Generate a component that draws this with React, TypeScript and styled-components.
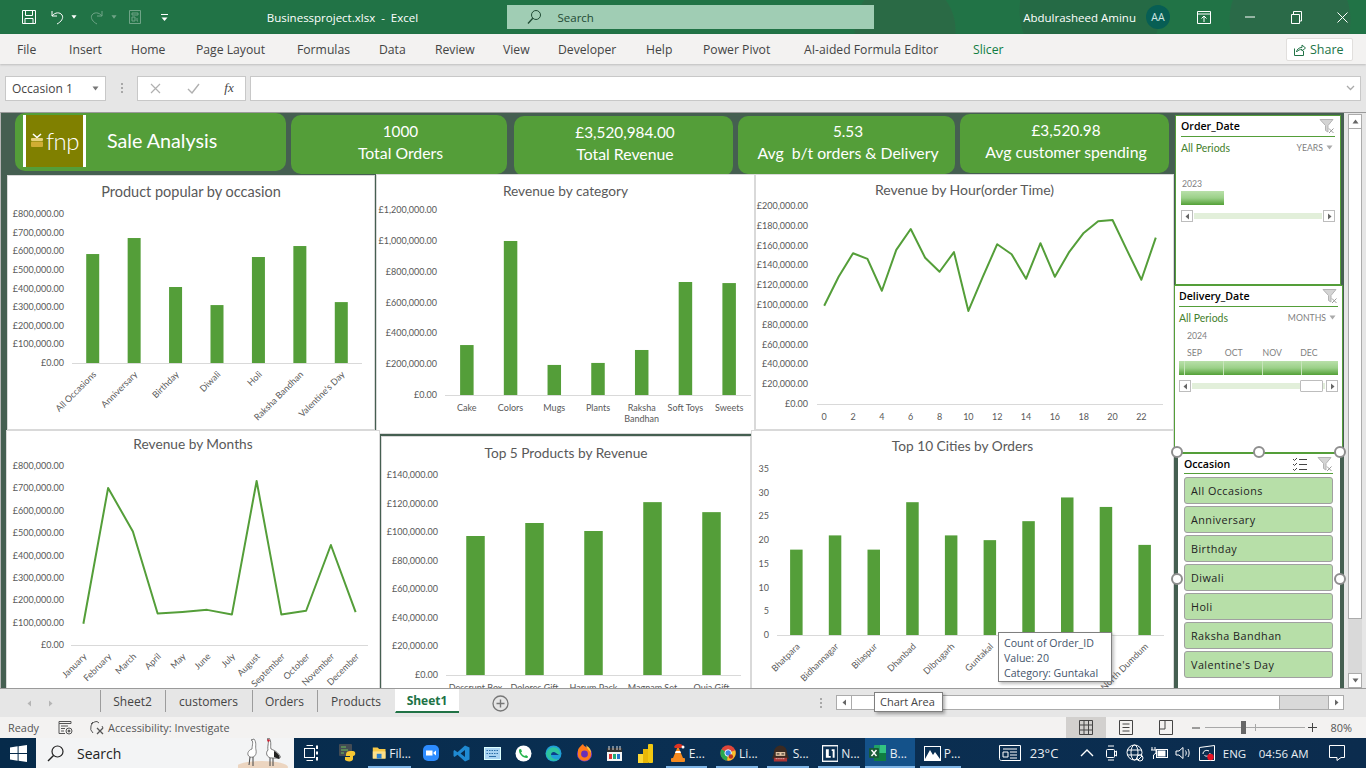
import React from 'react';
import styled, { createGlobalStyle } from 'styled-components';

const GREEN = '#549e39';
const DARK = '#455f51';
const UI_FONT = '"Open Sans", "Noto Sans", sans-serif';
const CHART_FONT = 'Lato, "Open Sans", sans-serif';

const GlobalStyle = createGlobalStyle`
  html, body { margin: 0; padding: 0; background: #e6e6e6; overflow: hidden; }
  * { box-sizing: border-box; }
`;

const Window = styled('div')`
  display: flex;
  flex-direction: column;
  width: 1366px;
  height: 768px;
  overflow: hidden;
  font-family: ${UI_FONT};
`;

/* title bar */
const TitleBar = styled('div')`
  display: flex;
  align-items: center;
  flex: none;
  height: 34px;
  color: #fff;
  background:
    radial-gradient(circle at 905px 30px, #2a6a45 0 50px, transparent 51px),
    radial-gradient(circle at 1090px 10px, #256a45 0 70px, transparent 71px),
    radial-gradient(circle at 1290px 20px, #2a6a48 0 60px, transparent 61px),
    #217346;
`;

const Qat = styled('div')`
  display: flex;
  align-items: center;
  width: 267px;
  padding-left: 20px;
`;

const Slot = styled('div')<{ $w: number; $ml?: number; $faded?: boolean }>`
  display: flex;
  align-items: center;
  justify-content: center;
  flex: none;
  width: ${(p) => p.$w}px;
  margin-left: ${(p) => p.$ml ?? 0}px;
  opacity: ${(p) => (p.$faded ? 0.35 : 1)};
`;

const FileTitle = styled('div')`
  width: 240px;
  font-size: 11.5px;
  white-space: pre;
`;

const SearchBox = styled('div')`
  display: flex;
  align-items: center;
  width: 368px;
  height: 24px;
  padding-left: 19px;
  gap: 16px;
  background: #a0cdb4;
  color: #1f4a33;
  font-size: 11.5px;
`;

const UserName = styled('div')`
  margin-left: 149px;
  width: 115px;
  font-size: 11.5px;
  white-space: nowrap;
`;

const Avatar = styled('div')`
  display: flex;
  align-items: center;
  justify-content: center;
  width: 24px;
  height: 24px;
  margin-left: 8px;
  border-radius: 50%;
  background: #075e54;
  color: #cfe8e4;
  font-size: 10.5px;
`;

const WindowButtons = styled('div')`
  display: flex;
  margin-left: 11px;
`;

/* ribbon tabs */
const RibbonTabs = styled('div')`
  display: flex;
  align-items: center;
  flex: none;
  height: 30px;
  padding-left: 17px;
  background: #f3f2f1;
  box-shadow: 0 1px 2px rgba(0, 0, 0, 0.18);
  position: relative;
  z-index: 1;
`;

const RibbonTab = styled('div')<{ $w: number; $accent?: boolean }>`
  flex: none;
  width: ${(p) => p.$w}px;
  font-size: 12.2px;
  color: ${(p) => (p.$accent ? '#107c41' : '#444')};
  white-space: nowrap;
`;

const ShareButton = styled('div')`
  display: flex;
  align-items: center;
  gap: 4px;
  margin-left: auto;
  margin-right: 13px;
  width: 67px;
  height: 23px;
  padding-left: 6px;
  background: #fff;
  border: 1px solid #e1dfdd;
  border-radius: 2px;
  color: #217346;
  font-size: 12.5px;
`;

/* formula bar */
const FormulaRow = styled('div')`
  display: flex;
  align-items: center;
  flex: none;
  height: 48px;
  padding: 0 5px;
  background: #e6e6e6;
`;

const NameBox = styled('div')`
  display: flex;
  align-items: center;
  justify-content: space-between;
  width: 101px;
  height: 25px;
  padding: 0 6px;
  background: #fff;
  border: 1px solid #c8c8c8;
  font-size: 12px;
  color: #444;
`;

const Grip = styled('div')`
  display: flex;
  flex-direction: column;
  gap: 2px;
  margin: 0 14px 0 15px;
  & > i { display: block; width: 2px; height: 2px; background: #a8a8a8; }
`;

const FxBox = styled('div')`
  display: flex;
  align-items: center;
  width: 109px;
  height: 25px;
  background: #fff;
  border: 1px solid #c8c8c8;
`;

const FxGlyph = styled('span')`
  font-family: "Liberation Serif", serif;
  font-style: italic;
  font-size: 13px;
  color: #444;
`;

const FormulaInput = styled('div')`
  display: flex;
  align-items: center;
  justify-content: flex-end;
  flex: 1;
  height: 25px;
  margin-left: 4px;
  padding-right: 5px;
  background: #fff;
  border: 1px solid #c8c8c8;
`;

/* sheet */
const Sheet = styled('div')`
  display: flex;
  flex: none;
  height: 576px;
  background: ${DARK};
  border-top: 1px solid #9a9a9a;
  border-left: 1px solid #b5b5b5;
  overflow: hidden;
`;

const Dash = styled('div')`
  display: flex;
  flex-direction: column;
  flex: none;
  width: 1173px;
`;

const KpiRow = styled('div')`
  display: flex;
  align-items: flex-start;
  flex: none;
  height: 61px;
  padding-left: 14px;
`;

const Kpi = styled('div')<{ $w: number; $h: number; $top: number; $gap: number }>`
  display: flex;
  flex-direction: column;
  align-items: center;
  justify-content: center;
  flex: none;
  width: ${(p) => p.$w}px;
  height: ${(p) => p.$h}px;
  margin-top: ${(p) => p.$top}px;
  margin-right: ${(p) => p.$gap}px;
  padding: 0 0 6px 3px;
  background: ${GREEN};
  border-radius: 10px;
  color: #fff;
  font-family: ${CHART_FONT};
  font-size: 15.8px;
  line-height: 22px;
  white-space: pre;
`;

const KpiValue = styled('span')`
  font-size: 15.3px;
`;

const BrandCard = styled(Kpi)`
  flex-direction: row;
  justify-content: flex-start;
  padding: 0 0 3px 8px;
`;

const LogoBox = styled('div')`
  display: flex;
  align-items: center;
  justify-content: center;
  gap: 2px;
  width: 63px;
  height: 52px;
  background: #808000;
  border-left: 3px solid #fff;
  border-right: 3px solid #fff;
`;

const LogoText = styled('span')`
  font-family: Lato, sans-serif;
  font-weight: 300;
  font-size: 24px;
  letter-spacing: -0.5px;
  color: #fff;
`;

const BrandTitle = styled('div')`
  margin-left: 21px;
  font-size: 19.7px;
`;

const ChartRow = styled('div')<{ $pad: number }>`
  display: flex;
  align-items: flex-start;
  flex: none;
  padding-left: ${(p) => p.$pad}px;
`;

const ChartCard = styled('div')<{ $w: number; $h: number; $left?: number; $top?: number; $tail?: number }>`
  position: relative;
  flex: none;
  width: ${(p) => p.$w}px;
  height: ${(p) => p.$h}px;
  margin-left: ${(p) => p.$left ?? 0}px;
  margin-top: ${(p) => p.$top ?? 0}px;
  margin-bottom: ${(p) => p.$tail ?? 0}px;
  background: #fff;
  border: 1px solid #d9d9d9;
`;

const ChartTitle = styled('div')<{ $top: number; $size?: number }>`
  padding-top: ${(p) => p.$top}px;
  text-align: center;
  font-family: ${CHART_FONT};
  font-size: ${(p) => p.$size ?? 13.7}px;
  line-height: 18px;
  color: #595959;
`;

const Plot = styled('svg')`
  position: absolute;
  top: 0;
  left: 0;
  display: block;
  font-family: ${CHART_FONT};
  font-size: 9px;
  fill: #595959;
`;

const ValueTip = styled('div')`
  position: absolute;
  left: 246px;
  top: 201px;
  width: 114px;
  height: 50px;
  padding: 3px 0 0 5px;
  background: #fff;
  border: 1px solid #7f7f7f;
  box-shadow: 2px 2px 3px rgba(0, 0, 0, 0.25);
  font-size: 10.6px;
  line-height: 15px;
  color: #44546a;
  white-space: nowrap;
`;

/* slicers */
const SlicerColumn = styled('div')`
  display: flex;
  flex-direction: column;
  flex: none;
  width: 170px;
`;

const DateSlicer = styled('div')<{ $w: number; $h: number; $left: number; $top: number; $pad: number }>`
  flex: none;
  width: ${(p) => p.$w}px;
  height: ${(p) => p.$h}px;
  margin-left: ${(p) => p.$left}px;
  margin-top: ${(p) => p.$top}px;
  padding: 0 ${(p) => p.$pad}px;
  background: #fff;
  border: 1px solid ${GREEN};
`;

const SlicerHead = styled('div')<{ $h: number }>`
  display: flex;
  align-items: center;
  justify-content: space-between;
  height: ${(p) => p.$h}px;
  border-bottom: 1px solid ${GREEN};
  font-family: ${UI_FONT};
  font-size: 10.6px;
  font-weight: 600;
  color: #000;
`;

const PeriodRow = styled('div')`
  display: flex;
  align-items: center;
  justify-content: space-between;
  height: 21px;
  color: #44802c;
  font-family: ${CHART_FONT};
  font-size: 10.5px;
`;

const LevelPick = styled('span')`
  display: flex;
  align-items: center;
  gap: 3px;
  padding-right: 2px;
  font-size: 8.7px;
  color: #7f7f7f;
`;

const YearLabel = styled('div')<{ $top: number; $left: number }>`
  margin-top: ${(p) => p.$top}px;
  padding-left: ${(p) => p.$left}px;
  font-family: ${CHART_FONT};
  font-size: 8.7px;
  line-height: 11px;
  color: #7f7f7f;
`;

const MonthRow = styled('div')`
  display: flex;
  margin-top: 6px;
  padding-left: 8px;
`;

const MonthLabel = styled('div')`
  width: 39px;
  font-family: ${CHART_FONT};
  font-size: 8.7px;
  line-height: 11px;
  color: #7f7f7f;
`;

const PeriodBar = styled('div')<{ $w?: number; $top: number }>`
  display: flex;
  width: ${(p) => (p.$w ? `${p.$w}px` : '100%')};
  height: 14px;
  margin-top: ${(p) => p.$top}px;
  background: linear-gradient(#b9e0aa, #9bd088 50%, #53a037);
`;

const BarCell = styled('div')<{ $w: number }>`
  flex: none;
  width: ${(p) => p.$w}px;
  border-right: 1px solid #c7e5bb;
`;

const TimeScroll = styled('div')<{ $top: number }>`
  display: flex;
  align-items: center;
  height: 12px;
  margin-top: ${(p) => p.$top}px;
`;

const ScrollNub = styled('div')`
  display: flex;
  align-items: center;
  justify-content: center;
  flex: none;
  width: 12px;
  height: 12px;
  background: #fff;
  border: 1px solid #bdbdbd;
`;

const TimeTrack = styled('div')`
  display: flex;
  justify-content: flex-end;
  align-items: center;
  flex: 1;
  height: 6px;
  margin: 0 1px;
  background: #e2efda;
`;

const TimeThumb = styled('div')`
  width: 23px;
  height: 12px;
  margin-right: 2px;
  background: #fff;
  border: 1px solid #bdbdbd;
  border-radius: 1px;
`;

const OccasionSlicer = styled('div')`
  position: relative;
  flex: none;
  width: 168px;
  height: 235px;
  margin-left: 1px;
  padding: 0 7px 0 6px;
  background: #fff;
  border-top: 1px solid ${GREEN};
  border-left: 3px solid ${DARK};
  border-right: 3px solid ${DARK};
`;

const OccasionIcons = styled('div')`
  display: flex;
  align-items: center;
  gap: 10px;
`;

const OccasionList = styled('div')`
  display: flex;
  flex-direction: column;
  gap: 2px;
  margin-top: 3px;
`;

const OccasionItem = styled('div')`
  display: flex;
  align-items: center;
  height: 27px;
  padding-left: 6px;
  background: #b7dfa8;
  border: 1px solid #a0a0a0;
  border-radius: 3px;
  font-size: 10.8px;
  letter-spacing: 0.45px;
  color: #222;
`;

const Handle = styled('div')<{ $x: number; $y: number }>`
  position: absolute;
  left: ${(p) => p.$x}px;
  top: ${(p) => p.$y}px;
  width: 12px;
  height: 12px;
  background: #fff;
  border: 2px solid #8e8e8e;
  border-radius: 50%;
`;

const VScroll = styled('div')`
  display: flex;
  flex-direction: column;
  flex: none;
  width: 22px;
  padding: 1px 4px 0 4px;
  background: #e6e6e6;
`;

const VBtn = styled('div')`
  display: flex;
  align-items: center;
  justify-content: center;
  flex: none;
  height: 15px;
  background: #fff;
  border: 1px solid #ababab;
`;

const VThumb = styled('div')`
  flex: none;
  height: 490px;
  background: #fff;
  border: 1px solid #ababab;
  border-top: none;
`;

const VRest = styled('div')`
  flex: 1;
  background: #d9d9d9;
`;

/* sheet tabs */
const TabRow = styled('div')`
  position: relative;
  display: flex;
  align-items: stretch;
  flex: none;
  height: 29px;
  background: #e6e6e6;
  border-top: 1px solid #9a9a9a;
`;

const TabNav = styled('div')`
  display: flex;
  align-items: center;
  gap: 14px;
  width: 100px;
  padding-left: 26px;
`;

const SheetTab = styled('div')<{ $w: number; $active?: boolean }>`
  display: flex;
  align-items: center;
  justify-content: center;
  flex: none;
  width: ${(p) => p.$w}px;
  height: ${(p) => (p.$active ? '24px' : '22px')};
  margin-top: ${(p) => (p.$active ? '0' : '1px')};
  padding-right: 1px;
  border-left: 1px solid ${(p) => (p.$active ? 'transparent' : '#9c9c9c')};
  background: ${(p) => (p.$active ? '#fff' : 'transparent')};
  border-bottom: ${(p) => (p.$active ? '2px solid #217346' : 'none')};
  color: ${(p) => (p.$active ? '#217346' : '#444')};
  font-weight: ${(p) => (p.$active ? 700 : 400)};
  font-size: 12px;
`;

const TabDots = styled(Grip)`
  margin: 0 0 0 311px;
  align-self: center;
`;

const HScroll = styled('div')`
  display: flex;
  align-items: stretch;
  align-self: flex-start;
  width: 508px;
  height: 15px;
  margin: 6px 0 0 14px;
  background: #d9d9d9;
  border: 1px solid #ababab;
`;

const HBtn = styled('div')`
  display: flex;
  align-items: center;
  justify-content: center;
  flex: none;
  width: 14px;
  background: #fff;
`;

const HThumb = styled('div')`
  flex: none;
  width: 429px;
  background: #fff;
  border-left: 1px solid #ababab;
  border-right: 1px solid #ababab;
`;

const HGap = styled('div')`
  flex: 1;
  border-right: 1px solid #ababab;
`;

const AreaTip = styled('div')`
  position: absolute;
  left: 874px;
  top: 3px;
  width: 69px;
  height: 20px;
  padding-left: 5px;
  background: #fff;
  border: 1px solid #7f7f7f;
  box-shadow: 2px 2px 3px rgba(0, 0, 0, 0.3);
  font-size: 11px;
  line-height: 18px;
  color: #444;
  white-space: nowrap;
`;

/* status bar */
const StatusBar = styled('div')`
  display: flex;
  align-items: center;
  flex: none;
  height: 21px;
  padding: 0 14px 0 8px;
  background: #f3f2f1;
  color: #555;
  font-size: 10.9px;
`;

const StatusText = styled('span')<{ $w?: number; $ml?: number }>`
  flex: none;
  width: ${(p) => (p.$w ? `${p.$w}px` : 'auto')};
  margin-left: ${(p) => p.$ml ?? 0}px;
  white-space: nowrap;
`;

const ViewButton = styled('div')<{ $active?: boolean; $push?: boolean }>`
  display: flex;
  align-items: center;
  justify-content: center;
  flex: none;
  width: 40px;
  height: 21px;
  margin-left: ${(p) => (p.$push ? 'auto' : '0')};
  background: ${(p) => (p.$active ? '#d2d0ce' : 'transparent')};
`;

const ZoomTrack = styled('div')`
  position: relative;
  flex: none;
  width: 100px;
  height: 1px;
  margin: 0 0 0 4px;
  background: #a8a8a8;
`;

const ZoomThumb = styled('div')`
  position: absolute;
  left: 36px;
  top: -6px;
  width: 5px;
  height: 13px;
  background: #666;
`;

const ZoomTick = styled('div')`
  position: absolute;
  left: 50px;
  top: -3px;
  width: 1px;
  height: 7px;
  background: #a8a8a8;
`;

/* task bar */
const TaskBar = styled('div')`
  display: flex;
  align-items: stretch;
  flex: none;
  height: 30px;
  background: linear-gradient(90deg, #062a4a 0, #0a2f52 50%, #0b2c4e 100%);
  color: #e9eef3;
  font-size: 12px;
`;

const WinSearch = styled('div')`
  position: relative;
  display: flex;
  align-items: center;
  flex: none;
  width: 258px;
  padding-left: 11px;
  gap: 13px;
  background: #f3f4f5;
  color: #222;
  font-size: 14px;
  overflow: hidden;
`;

const CraneArt = styled('svg')`
  position: absolute;
  right: 4px;
  top: 0;
`;

const TaskItem = styled('div')<{ $w: number; $ml?: number; $running?: boolean; $active?: boolean }>`
  display: flex;
  align-items: center;
  justify-content: ${(p) => (p.$running ? 'flex-start' : 'center')};
  flex: none;
  gap: 3px;
  width: ${(p) => p.$w}px;
  margin-left: ${(p) => p.$ml ?? 0}px;
  padding-left: ${(p) => (p.$running ? '4px' : '0')};
  background: ${(p) => (p.$active ? '#14528a' : 'transparent')};
  border-bottom: 2px solid ${(p) => (p.$running ? '#7fb5e6' : 'transparent')};
  border-top: 2px solid transparent;
  white-space: nowrap;
`;

const TrayText = styled('div')<{ $w: number; $ml?: number; $size?: number }>`
  display: flex;
  align-items: center;
  flex: none;
  width: ${(p) => p.$w}px;
  margin-left: ${(p) => p.$ml ?? 0}px;
  font-size: ${(p) => p.$size ?? 11.5}px;
  white-space: nowrap;
`;

const IconSvg = styled('svg')`
  display: block;
  flex: none;
`;

/* charts */
interface IPlotArea {
  left: number;
  right: number;
  top: number;
  bottom: number;
}

interface IAxis {
  width: number;
  height: number;
  area: IPlotArea;
  ticks: string[];
  labelRight: number;
  max: number;
}

const GridAxis: React.FC<IAxis & { children?: React.ReactNode }> = ({ width, height, area, ticks, labelRight, children }) => (
  <Plot width={width} height={height}>
    {ticks.map((t, i) => (
      <text key={t} x={labelRight} y={area.top + ((area.bottom - area.top) * i) / (ticks.length - 1) + 3} textAnchor="end">
        {t}
      </text>
    ))}
    <line x1={area.left} x2={area.right} y1={area.bottom + 0.5} y2={area.bottom + 0.5} stroke="#d9d9d9" />
    {children}
  </Plot>
);

interface ISeries extends IAxis {
  values: number[];
  labels: (string | string[])[];
  barWidth?: number;
  rotate?: boolean;
  labelEvery?: number;
}

const XLabels: React.FC<{ area: IPlotArea; labels: (string | string[])[]; rotate?: boolean; every?: number; count: number }> = ({
  area,
  labels,
  rotate,
  every = 1,
  count,
}) => {
  const band = (area.right - area.left) / count;
  return (
    <>
      {labels.map((label, i) => {
        if (!label) return null;
        const cx = area.left + band * (i * every + 0.5);
        if (rotate) {
          return (
            <text key={i} transform={`translate(${cx + 4} ${area.bottom + 12}) rotate(-45)`} textAnchor="end">
              {label}
            </text>
          );
        }
        const lines = Array.isArray(label) ? label : [label];
        return lines.map((line, j) => (
          <text key={`${i}-${j}`} x={cx} y={area.bottom + 16 + j * 11} textAnchor="middle">
            {line}
          </text>
        ));
      })}
    </>
  );
};

const BarChart: React.FC<ISeries> = ({ values, labels, barWidth = 13, rotate, ...axis }) => {
  const { area, max } = axis;
  const band = (area.right - area.left) / values.length;
  const scale = (area.bottom - area.top) / max;
  return (
    <GridAxis {...axis}>
      {values.map((v, i) => (
        <rect key={i} x={area.left + band * (i + 0.5) - barWidth / 2} y={area.bottom - v * scale} width={barWidth} height={v * scale} fill={GREEN} />
      ))}
      <XLabels area={area} labels={labels} rotate={rotate} count={values.length} />
    </GridAxis>
  );
};

const LineChart: React.FC<ISeries> = ({ values, labels, rotate, labelEvery, ...axis }) => {
  const { area, max } = axis;
  const band = (area.right - area.left) / values.length;
  const scale = (area.bottom - area.top) / max;
  const points = values.map((v, i) => `${area.left + band * (i + 0.5)},${area.bottom - v * scale}`).join(' ');
  return (
    <GridAxis {...axis}>
      <polyline points={points} fill="none" stroke={GREEN} strokeWidth={2} strokeLinejoin="round" />
      <XLabels area={area} labels={labels} rotate={rotate} every={labelEvery} count={values.length} />
    </GridAxis>
  );
};

const descending = (top: number, step: number) => {
  const out: string[] = [];
  for (let v = top; v >= 0; v -= step) out.push(`£${v.toLocaleString('en-GB')}.00`);
  return out;
};

/* icons */
const Svg: React.FC<{ w?: number; h?: number; color?: string; children: React.ReactNode }> = ({ w = 16, h = 16, color = 'currentColor', children }) => (
  <IconSvg width={w} height={h} viewBox={`0 0 ${w} ${h}`} fill="none" stroke={color} strokeWidth={1}>
    {children}
  </IconSvg>
);

const Caret: React.FC<{ color?: string; dir?: 'up' | 'down' | 'left' | 'right'; size?: number }> = ({ color = '#666', dir = 'down', size = 7 }) => {
  const d = { up: 'M0.5 5.5 L3.5 1.5 L6.5 5.5Z', down: 'M0.5 1.5 L6.5 1.5 L3.5 5.5Z', left: 'M5 0.5 L5 6.5 L1.5 3.5Z', right: 'M2 0.5 L2 6.5 L5.5 3.5Z' }[dir];
  return (
    <IconSvg width={size} height={size} viewBox="0 0 7 7">
      <path d={d} fill={color} />
    </IconSvg>
  );
};

const FunnelClear: React.FC = () => (
  <Svg w={16} h={16} color="#b4b4b4">
    <path d="M1 1.5H14L9 7.5V14L6.5 12.5V7.5Z" fill="#d4d4d4" />
    <path d="M10 10.5L14.5 15M14.5 10.5L10 15" stroke="#9a9a9a" />
  </Svg>
);

const FnpGift = () => (
  <IconSvg width={14} height={15} viewBox="0 0 14 15">
    <path d="M3 1L7 4.5L11 1" stroke="#fff" strokeWidth={1.6} fill="none" />
    <rect x={1} y={5} width={12} height={3} rx={1} fill="#e6d27a" />
    <rect x={1} y={8.5} width={12} height={5.5} rx={1} fill="#d0ad33" />
  </IconSvg>
);

const WinLogo = () => (
  <IconSvg width={17} height={17} viewBox="0 0 17 17">
    <path d="M0 2.4L7.6 1.3V8H0ZM8.6 1.2L17 0V8H8.6ZM0 9H7.6V15.7L0 14.6ZM8.6 9H17V17L8.6 15.8Z" fill="#fff" />
  </IconSvg>
);

const Cranes = () => (
  <CraneArt width={52} height={30} viewBox="0 0 52 30">
    <ellipse cx={24} cy={29} rx={26} ry={6} fill="#ecd5c0" />
    <path d="M13 2C16 2 14 8 14 11C10 12 8 17 12 19C16 20 19 17 18 12C17 8 19 5 16 1Z" fill="#fff" stroke="#555" strokeWidth={0.7} />
    <path d="M15 19V28M12 19L11 27" stroke="#444" />
    <path d="M29 1C32 2 29 8 30 12C27 15 29 20 34 20C39 20 44 21 42 18C39 13 35 12 33 11C32 8 34 4 31 0Z" fill="#fff" stroke="#444" strokeWidth={0.7} />
    <path d="M36 13C40 15 43 19 41 21L36 19Z" fill="#222" />
    <path d="M30 1L32 2L31 4L29 3Z" fill="#c23" />
    <path d="M32 20V28M35 20V28" stroke="#444" />
  </CraneArt>
);

const AppIcon: React.FC<{ kind: string }> = ({ kind }) => {
  switch (kind) {
    case 'taskview':
      return (
        <Svg w={18} h={18} color="#fff">
          <path d="M3.5 1.5H10M3.5 16.5H10" />
          <rect x={1.5} y={4.5} width={10} height={9} />
          <path d="M14 1.5V5M14 7.5V10.5M14 13V16.5" strokeWidth={2} />
        </Svg>
      );
    case 'python':
      return (
        <svg width={18} height={18} viewBox="0 0 18 18">
          <rect x={0} y={0} width={13} height={12} rx={1} fill="#444c54" />
          <path d="M2 3H7M2 6H9M2 9H5" stroke="#6fbf5a" />
          <path d="M11 7C7 7 7 10 7 12H11V13H6V16C8 18 14 18 14 15V12C17 12 17 7 14 7Z" fill="#f5c733" />
        </svg>
      );
    case 'files':
      return (
        <svg width={18} height={16} viewBox="0 0 18 16">
          <path d="M1 1H7L9 3H17V15H1Z" fill="#f7c948" />
          <rect x={1} y={6} width={16} height={9} fill="#fce08a" />
          <rect x={6} y={9} width={6} height={6} fill="#2a7fcf" />
        </svg>
      );
    case 'zoom':
      return (
        <svg width={16} height={16} viewBox="0 0 16 16">
          <rect width={16} height={16} rx={5} fill="#2d8cff" />
          <path d="M3 5.5H9.5V10.5H3Z M10.5 7.5L13 5.5V10.5L10.5 8.5Z" fill="#fff" />
        </svg>
      );
    case 'vscode':
      return (
        <svg width={17} height={17} viewBox="0 0 17 17">
          <path d="M12 0.5L16.5 2.5V14.5L12 16.5L4.5 9.8L1.5 12L0.5 11V6L1.5 5L4.5 7.2ZM12 5L7.5 8.5L12 12Z" fill="#1f8ad2" />
        </svg>
      );
    case 'keyboard':
      return (
        <svg width={17} height={13} viewBox="0 0 17 13">
          <rect x={0.5} y={0.5} width={16} height={12} fill="#a8d3f2" stroke="#dff" />
          <path d="M2.5 3.5H14.5M2.5 6.5H14.5" stroke="#2a6fa8" strokeDasharray="1.5 1" />
          <path d="M5 9.5H12" stroke="#2a6fa8" />
        </svg>
      );
    case 'whatsapp':
      return (
        <svg width={17} height={17} viewBox="0 0 17 17">
          <circle cx={8.5} cy={8.5} r={8} fill="#fff" />
          <path d="M4 4.5L6 4L7 6.5L6 7.5C7 9.5 8 10.5 10 11L11 10L13 11.5L12.5 13C8 13.5 3.5 9 4 4.5Z" fill="#25b54c" />
        </svg>
      );
    case 'edge':
      return (
        <svg width={17} height={17} viewBox="0 0 17 17">
          <circle cx={8.5} cy={8.5} r={8} fill="#1f9fd8" />
          <path d="M1 9C2 3 8 1 12 3C15 5 16 9 14 10H6C6 13 10 15 14 14C11 17 3 17 1 9Z" fill="#2ec4a0" />
          <path d="M6 10C6 7 9 6 11 8L14 10Z" fill="#0d3f8a" />
        </svg>
      );
    case 'firefox':
      return (
        <svg width={17} height={18} viewBox="0 0 17 18">
          <circle cx={8.5} cy={10} r={7.5} fill="#7b3fc4" />
          <path d="M2 6C3 3 5 2 7 0C8 3 11 3 13 5C16 8 16 13 12 16C8 18 3 16 2 12Z" fill="#ff7a1a" />
          <circle cx={8.5} cy={10} r={3.4} fill="#6a2fb8" />
          <path d="M10 1C12 3 15 4 15 9C13 6 11 5 10 1Z" fill="#ffc93a" />
        </svg>
      );
    case 'calendar':
      return (
        <svg width={17} height={17} viewBox="0 0 17 17">
          <rect x={1} y={3} width={15} height={13} fill="#f5f5f5" />
          <rect x={1} y={3} width={15} height={4} fill="#333" />
          <path d="M3 1V5M7 1V5M11 1V5M14 1V5" stroke="#ddd" />
          <rect x={3} y={9} width={3} height={5} fill="#d33" />
          <rect x={7} y={9} width={3} height={5} fill="#2a7" />
          <rect x={11} y={9} width={3} height={5} fill="#27c" />
        </svg>
      );
    case 'powerbi':
      return (
        <svg width={15} height={19} viewBox="0 0 15 19">
          <rect x={10} y={0} width={5} height={19} rx={1} fill="#f2c811" />
          <rect x={5} y={5} width={5} height={14} fill="#e8b708" />
          <rect x={0} y={10} width={5} height={9} fill="#fdd835" />
        </svg>
      );
    case 'vlc':
      return (
        <svg width={16} height={20} viewBox="0 0 16 20">
          <path d="M8 3L13 15H3Z" fill="#f58a1f" />
          <path d="M5.8 8H10.2L11 10H5Z" fill="#fff" />
          <rect x={1} y={15} width={14} height={4} rx={1} fill="#f58a1f" />
          <path d="M4 4C6 0 11 0 13 3L11 5H5Z" fill="#d32" />
          <circle cx={13} cy={4} r={1.5} fill="#fff" />
        </svg>
      );
    case 'chrome':
      return (
        <svg width={18} height={18} viewBox="0 0 18 18">
          <circle cx={9} cy={9} r={8.5} fill="#e0463a" />
          <path d="M9 9L1.6 4.8C0 7 0 12 2.5 14.5C4 16.5 6 17.3 8 17.4Z" fill="#2aa84f" />
          <path d="M9 9L16.8 6C18 9 17.5 14 12 17C10.5 17.5 9 17.5 8 17.4Z" fill="#f8c22c" />
          <circle cx={9} cy={9} r={3.6} fill="#3d84e6" stroke="#fff" />
          <circle cx={12} cy={13} r={2.5} fill="#b32" />
        </svg>
      );
    case 'game':
      return (
        <svg width={20} height={18} viewBox="0 0 20 18">
          <path d="M3 9C3 3 7 1 10 1C14 1 17 4 17 9L19 15H1Z" fill="#3a2a22" />
          <rect x={5} y={8} width={10} height={4} fill="#e8c9a8" />
          <path d="M6 10H9M11 10H14" stroke="#111" />
          <path d="M3 14H17V18H3Z" fill="#a33" />
          <path d="M5 15H15" stroke="#eee" strokeDasharray="1 1" />
        </svg>
      );
    case 'notion':
      return (
        <svg width={17} height={17} viewBox="0 0 17 17">
          <rect x={0.5} y={0.5} width={16} height={16} fill="#0a2f52" stroke="#fff" strokeWidth={1.4} />
          <path d="M4 4H7V11H9V13H4ZM10 4H13V13H11V6H10Z" fill="#fff" />
        </svg>
      );
    case 'excel':
      return (
        <svg width={18} height={18} viewBox="0 0 18 18">
          <rect x={5} y={1} width={12} height={16} rx={1} fill="#21a366" />
          <rect x={11} y={1} width={6} height={8} fill="#33c481" />
          <rect x={5} y={9} width={12} height={8} fill="#107c41" />
          <rect x={0} y={4} width={10} height={10} rx={1} fill="#185c37" />
          <path d="M2.5 6L7.5 12M7.5 6L2.5 12" stroke="#fff" strokeWidth={1.4} />
        </svg>
      );
    case 'photos':
      return (
        <svg width={17} height={15} viewBox="0 0 17 15">
          <rect x={0.5} y={0.5} width={16} height={14} fill="#0a2f52" stroke="#fff" />
          <path d="M1 13L6 4L9 9L11 6L16 13V14H1Z" fill="#fff" />
        </svg>
      );
    default:
      return null;
  }
};

const ribbonTabs: [string, number][] = [
  ['File', 52], ['Insert', 62], ['Home', 65], ['Page Layout', 101], ['Formulas', 82], ['Data', 56], ['Review', 68], ['View', 55],
  ['Developer', 88], ['Help', 57], ['Power Pivot', 101], ['AI-aided Formula Editor', 169],
];

const occasions = ['All Occasions', 'Anniversary', 'Birthday', 'Diwali', 'Holi', 'Raksha Bandhan', "Valentine's Day"];
const occasionValues = [585, 671, 408, 311, 569, 628, 327];
const categoryLabels = ['Cake', 'Colors', 'Mugs', 'Plants', ['Raksha', 'Bandhan'], 'Soft Toys', 'Sweets'];
const categoryValues = [324, 999, 195, 208, 292, 733, 726];
const hourValues = [99.3, 128.5, 152.3, 146.6, 114.4, 155.7, 176.8, 147.7, 133.6, 153.4, 94, 128.5, 161.4, 151.3, 126.5, 162.4, 128.5, 153.7, 172.8, 184.6, 185.9, 155.4, 125.5, 168.1];
const hourLabels = Array.from({ length: 12 }, (_, i) => String(i * 2));
const months = ['January', 'February', 'March', 'April', 'May', 'June', 'July', 'August', 'September', 'October', 'November', 'December'];
const monthValues = [95, 702, 507, 141, 148, 157, 136, 733, 136, 153, 447, 147];
const productLabels = ['Descrupt Box', 'Dolores Gift', 'Harum Pack', 'Magnam Set', 'Quia Gift'];
const productValues = [97.3, 106.4, 100.8, 121, 114];
const cityValues = [18, 21, 18, 28, 21, 20, 24, 29, 27, 19];
const cityLabels = ['Bhatpara', 'Bidhannagar', 'Bilaspur', 'Dhanbad', 'Dibrugarh', 'Guntakal', '', '', '', 'North Dumdum'];

const App: React.FC = () => (
  <Window>
    <GlobalStyle />
    <TitleBar>
      <Qat>
        <Slot $w={18}>
          <Svg color="#fff">
            <path d="M1.5 1.5H14.5V14.5H1.5Z M4.5 1.5V6.5H11.5V1.5 M4 14.5V9.5H12V14.5" />
          </Svg>
        </Slot>
        <Slot $w={26} $ml={6}>
          <Svg color="#fff">
            <path d="M3 2V7H8 M3 7C6 3 11 3 13 6C15 9 12 13 8 15" />
          </Svg>
        </Slot>
        <Slot $w={8}><Caret color="#fff" size={6} /></Slot>
        <Slot $w={26} $ml={6} $faded>
          <Svg color="#fff">
            <path d="M13 2V7H8 M13 7C10 3 5 3 3 6C1 9 4 13 8 15" />
          </Svg>
        </Slot>
        <Slot $w={8} $faded><Caret color="#fff" size={6} /></Slot>
        <Slot $w={18} $ml={8} $faded>
          <Svg color="#fff">
            <path d="M2.5 1.5H13.5V14.5H2.5Z M5 4H11V6H5Z M5 8H8V12H5Z M10 9V12H11" />
          </Svg>
        </Slot>
        <Slot $w={16} $ml={12}>
          <Svg w={9} h={9} color="#fff">
            <path d="M1 1.5H8" />
            <path d="M1.5 4.5H7.5L4.5 8Z" fill="#fff" stroke="none" />
          </Svg>
        </Slot>
      </Qat>
      <FileTitle>Businessproject.xlsx  -  Excel</FileTitle>
      <SearchBox>
        <Svg w={16} h={16} color="#1f4a33">
          <circle cx={10} cy={6} r={4.5} />
          <path d="M6.8 9.2L2 14.5" strokeWidth={1.3} />
        </Svg>
        Search
      </SearchBox>
      <UserName>Abdulrasheed Aminu</UserName>
      <Avatar>AA</Avatar>
      <WindowButtons>
        <Slot $w={47}>
          <Svg w={14} h={13} color="#fff">
            <path d="M0.5 0.5H13.5V12.5H0.5Z M0.5 3H13.5 M7 11V5.5 M4.5 7.5L7 5L9.5 7.5" />
          </Svg>
        </Slot>
        <Slot $w={45}>
          <Svg w={10} h={2} color="#fff"><path d="M0 1H10" /></Svg>
        </Slot>
        <Slot $w={47}>
          <Svg w={11} h={13} color="#fff">
            <path d="M0.5 3.5H8.5V12.5H0.5Z M2.5 3.5V0.5H10.5V10H8.5" />
          </Svg>
        </Slot>
        <Slot $w={46}>
          <Svg w={11} h={11} color="#fff"><path d="M0.5 0.5L10.5 10.5M10.5 0.5L0.5 10.5" /></Svg>
        </Slot>
      </WindowButtons>
    </TitleBar>

    <RibbonTabs>
      {ribbonTabs.map(([label, w]) => (
        <RibbonTab key={label} $w={w}>{label}</RibbonTab>
      ))}
      <RibbonTab $w={40} $accent>Slicer</RibbonTab>
      <ShareButton>
        <Svg w={13} h={13} color="#217346">
          <path d="M1.5 5.5V12.5H10.5V8 M3.5 9C4 6 6 4.5 9 4.5V2L12.5 5L9 8V6.5C7 6.5 5 7 3.5 9Z" />
        </Svg>
        Share
      </ShareButton>
    </RibbonTabs>

    <FormulaRow>
      <NameBox>
        Occasion 1
        <Caret color="#777" />
      </NameBox>
      <Grip><i /><i /><i /></Grip>
      <FxBox>
        <Slot $w={34}>
          <Svg w={11} h={11} color="#b0b0b0"><path d="M1 1L10 10M10 1L1 10" strokeWidth={1.2} /></Svg>
        </Slot>
        <Slot $w={42}>
          <Svg w={13} h={11} color="#b0b0b0"><path d="M1 6L5 10L12 1" strokeWidth={1.4} /></Svg>
        </Slot>
        <Slot $w={30}><FxGlyph>fx</FxGlyph></Slot>
      </FxBox>
      <FormulaInput>
        <Svg w={9} h={6} color="#aaa"><path d="M1 1L4.5 4.5L8 1" strokeWidth={1.3} /></Svg>
      </FormulaInput>
    </FormulaRow>

    <Sheet>
      <Dash>
        <KpiRow>
          <BrandCard $w={271} $h={58} $top={0} $gap={5}>
            <LogoBox>
              <FnpGift />
              <LogoText>fnp</LogoText>
            </LogoBox>
            <BrandTitle>Sale Analysis</BrandTitle>
          </BrandCard>
          <Kpi $w={216} $h={59} $top={2} $gap={7}><KpiValue>1000</KpiValue><span>Total Orders</span></Kpi>
          <Kpi $w={219} $h={60} $top={3} $gap={5}><KpiValue>£3,520,984.00</KpiValue><span>Total Revenue</span></Kpi>
          <Kpi $w={217} $h={58} $top={3} $gap={5}><KpiValue>5.53</KpiValue><span>Avg  b/t orders &amp; Delivery</span></Kpi>
          <Kpi $w={209} $h={59} $top={1} $gap={0}><KpiValue>£3,520.98</KpiValue><span>Avg customer spending</span></Kpi>
        </KpiRow>
        <ChartRow $pad={6}>
          <ChartCard $w={368} $h={255} $top={1}>
            <ChartTitle $top={7} $size={14.5}>Product popular by occasion</ChartTitle>
            <BarChart
              width={368}
              height={255}
              area={{ left: 64, right: 354, top: 38, bottom: 187 }}
              ticks={descending(800000, 100000)}
              labelRight={56}
              max={800}
              values={occasionValues}
              labels={occasions}
              rotate
            />
          </ChartCard>
          <ChartCard $w={379} $h={260} $left={1} $tail={-4}>
            <ChartTitle $top={7}>Revenue by category</ChartTitle>
            <BarChart
              width={379}
              height={260}
              area={{ left: 68, right: 374, top: 35, bottom: 220 }}
              ticks={descending(1200000, 200000)}
              labelRight={60}
              max={1200}
              values={categoryValues}
              labels={categoryLabels}
              barWidth={13.5}
            />
          </ChartCard>
          <ChartCard $w={419} $h={256}>
            <ChartTitle $top={6} $size={14}>Revenue by Hour(order Time)</ChartTitle>
            <LineChart
              width={419}
              height={256}
              area={{ left: 61, right: 407, top: 31, bottom: 229 }}
              ticks={descending(200000, 20000)}
              labelRight={52}
              max={200}
              values={hourValues}
              labels={hourLabels}
              labelEvery={2}
            />
          </ChartCard>
        </ChartRow>
        <ChartRow $pad={5}>
          <ChartCard $w={374} $h={260}>
            <ChartTitle $top={4}>Revenue by Months</ChartTitle>
            <LineChart
              width={374}
              height={260}
              area={{ left: 64, right: 361, top: 35, bottom: 214 }}
              ticks={descending(800000, 100000)}
              labelRight={57}
              max={800}
              values={monthValues}
              labels={months}
              rotate
            />
          </ChartCard>
          <ChartCard $w={370} $h={254} $left={1} $top={6}>
            <ChartTitle $top={7}>Top 5 Products by Revenue</ChartTitle>
            <BarChart
              width={370}
              height={254}
              area={{ left: 64, right: 359, top: 38, bottom: 238 }}
              ticks={descending(140000, 20000)}
              labelRight={56}
              max={140}
              values={productValues}
              labels={productLabels}
              barWidth={18.5}
            />
          </ChartCard>
          <ChartCard $w={423} $h={260}>
            <ChartTitle $top={6}>Top 10 Cities by Orders</ChartTitle>
            <BarChart
              width={423}
              height={260}
              area={{ left: 25, right: 412, top: 38, bottom: 204 }}
              ticks={['35', '30', '25', '20', '15', '10', '5', '0']}
              labelRight={17}
              max={35}
              values={cityValues}
              labels={cityLabels}
              barWidth={12.5}
              rotate
            />
            <ValueTip>
              Count of Order_ID
              <br />
              Value: 20
              <br />
              Category: Guntakal
            </ValueTip>
          </ChartCard>
        </ChartRow>
      </Dash>

      <SlicerColumn>
        <DateSlicer $w={166} $h={170} $left={1} $top={2} $pad={5}>
          <SlicerHead $h={21}>
            Order_Date
            <FunnelClear />
          </SlicerHead>
          <PeriodRow>
            All Periods
            <LevelPick>YEARS <Caret color="#aaa" /></LevelPick>
          </PeriodRow>
          <YearLabel $top={20} $left={1}>2023</YearLabel>
          <PeriodBar $w={43} $top={2} />
          <TimeScroll $top={5}>
            <ScrollNub><Caret dir="left" /></ScrollNub>
            <TimeTrack />
            <ScrollNub><Caret dir="right" /></ScrollNub>
          </TimeScroll>
        </DateSlicer>
        <DateSlicer $w={169} $h={168} $left={0} $top={0} $pad={4}>
          <SlicerHead $h={21}>
            Delivery_Date
            <FunnelClear />
          </SlicerHead>
          <PeriodRow>
            All Periods
            <LevelPick>MONTHS <Caret color="#aaa" /></LevelPick>
          </PeriodRow>
          <YearLabel $top={2} $left={8}>2024</YearLabel>
          <MonthRow>
            <MonthLabel>SEP</MonthLabel>
            <MonthLabel>OCT</MonthLabel>
            <MonthLabel>NOV</MonthLabel>
            <MonthLabel>DEC</MonthLabel>
          </MonthRow>
          <PeriodBar $top={3}>
            <BarCell $w={6} />
            <BarCell $w={39} />
            <BarCell $w={39} />
            <BarCell $w={39} />
          </PeriodBar>
          <TimeScroll $top={5}>
            <ScrollNub><Caret dir="left" /></ScrollNub>
            <TimeTrack><TimeThumb /></TimeTrack>
            <ScrollNub><Caret dir="right" /></ScrollNub>
          </TimeScroll>
        </DateSlicer>
        <OccasionSlicer>
          <SlicerHead $h={20}>
            Occasion
            <OccasionIcons>
              <Svg w={15} h={14} color="#444">
                <path d="M1 2L2.5 3.5L5 1M1 7L2.5 8.5L5 6M1 12L2.5 13.5L5 11M7 2.5H15M7 7.5H15M7 12.5H15" />
              </Svg>
              <FunnelClear />
            </OccasionIcons>
          </SlicerHead>
          <OccasionList>
            {occasions.map((o) => (
              <OccasionItem key={o}>{o}</OccasionItem>
            ))}
          </OccasionList>
          <Handle $x={-7} $y={-8} />
          <Handle $x={75} $y={-8} />
          <Handle $x={156} $y={-8} />
          <Handle $x={-7} $y={119} />
          <Handle $x={156} $y={119} />
        </OccasionSlicer>
      </SlicerColumn>

      <VScroll>
        <VBtn><Caret dir="up" /></VBtn>
        <VThumb />
        <VRest />
        <VBtn><Caret /></VBtn>
      </VScroll>
    </Sheet>

    <TabRow>
      <TabNav>
        <Caret dir="left" color="#b5b5b5" />
        <Caret dir="right" color="#b5b5b5" />
      </TabNav>
      <SheetTab $w={65}>Sheet2</SheetTab>
      <SheetTab $w={87}>customers</SheetTab>
      <SheetTab $w={65}>Orders</SheetTab>
      <SheetTab $w={78}>Products</SheetTab>
      <SheetTab $w={64} $active>Sheet1</SheetTab>
      <Slot $w={17} $ml={33}>
        <Svg w={17} h={17} color="#777">
          <circle cx={8.5} cy={8.5} r={7.5} strokeWidth={1.3} />
          <path d="M8.5 4.5V12.5M4.5 8.5H12.5" strokeWidth={1.4} />
        </Svg>
      </Slot>
      <TabDots><i /><i /><i /></TabDots>
      <HScroll>
        <HBtn><Caret dir="left" /></HBtn>
        <HThumb />
        <HGap />
        <HBtn><Caret dir="right" /></HBtn>
      </HScroll>
      <AreaTip>Chart Area</AreaTip>
    </TabRow>

    <StatusBar>
      <StatusText $w={50}>Ready</StatusText>
      <Svg w={15} h={15} color="#555">
        <path d="M1 1.5H13V3.5H1Z M1 3.5V13.5H7 M3 6H10M3 8.5H7M3 11H6" />
        <circle cx={11} cy={11} r={3} />
        <circle cx={11} cy={11} r={1} fill="#555" />
      </Svg>
      <Slot $w={18} $ml={15}>
        <Svg w={16} h={16} color="#555">
          <path d="M8 1.5A6.5 6.5 0 0 0 4 13 M2 4L4 2 M8 1.5L10 3 M13 6L14 8" />
          <path d="M8 8L14 14M14 8L8 14" strokeWidth={1.3} />
        </Svg>
      </Slot>
      <StatusText $ml={2}>Accessibility: Investigate</StatusText>
      <ViewButton $active $push>
        <Svg w={14} h={15} color="#444"><path d="M0.5 0.5H13.5V14.5H0.5Z M0.5 5H13.5M0.5 10H13.5M5 0.5V14.5M9.5 0.5V14.5" /></Svg>
      </ViewButton>
      <ViewButton>
        <Svg w={14} h={15} color="#444"><path d="M0.5 0.5H13.5V14.5H0.5Z M3.5 4H10.5M3.5 7.5H10.5M3.5 11H10.5" /></Svg>
      </ViewButton>
      <ViewButton>
        <Svg w={14} h={15} color="#444"><path d="M0.5 0.5H13.5V14.5H0.5Z M0.5 9H6V0.5" /></Svg>
      </ViewButton>
      <Slot $w={10} $ml={5}>
        <Svg w={8} h={2} color="#444"><path d="M0 1H8" /></Svg>
      </Slot>
      <ZoomTrack><ZoomTick /><ZoomThumb /></ZoomTrack>
      <Slot $w={10} $ml={3}>
        <Svg w={9} h={9} color="#444"><path d="M0 4.5H9M4.5 0V9" /></Svg>
      </Slot>
      <StatusText $ml={13}>80%</StatusText>
    </StatusBar>

    <TaskBar>
      <Slot $w={36}><WinLogo /></Slot>
      <WinSearch>
        <Svg w={17} h={17} color="#222">
          <circle cx={10.5} cy={6.5} r={5.5} strokeWidth={1.2} />
          <path d="M6.5 10.5L1 16" strokeWidth={1.4} />
        </Svg>
        Search
        <Cranes />
      </WinSearch>
      <TaskItem $w={36}><AppIcon kind="taskview" /></TaskItem>
      <TaskItem $w={36}><AppIcon kind="python" /></TaskItem>
      <TaskItem $w={43} $ml={2} $running><AppIcon kind="files" />Fil...</TaskItem>
      <TaskItem $w={30.6} $ml={5}><AppIcon kind="zoom" /></TaskItem>
      <TaskItem $w={30.6}><AppIcon kind="vscode" /></TaskItem>
      <TaskItem $w={30.6}><AppIcon kind="keyboard" /></TaskItem>
      <TaskItem $w={30.6}><AppIcon kind="whatsapp" /></TaskItem>
      <TaskItem $w={30.6}><AppIcon kind="edge" /></TaskItem>
      <TaskItem $w={30.6}><AppIcon kind="firefox" /></TaskItem>
      <TaskItem $w={30.6}><AppIcon kind="calendar" /></TaskItem>
      <TaskItem $w={30.6}><AppIcon kind="powerbi" /></TaskItem>
      <TaskItem $w={41} $ml={5} $running><AppIcon kind="vlc" />E...</TaskItem>
      <TaskItem $w={42} $ml={9} $running><AppIcon kind="chrome" />Li...</TaskItem>
      <TaskItem $w={42} $ml={9} $running><AppIcon kind="game" />S...</TaskItem>
      <TaskItem $w={42} $ml={9} $running><AppIcon kind="notion" />N...</TaskItem>
      <TaskItem $w={50} $ml={5} $running $active><AppIcon kind="excel" />B...</TaskItem>
      <TaskItem $w={41} $ml={5} $running><AppIcon kind="photos" />P...</TaskItem>
      <Slot $w={24} $ml={37}>
        <Svg w={24} h={20} color="#fff">
          <path d="M1.5 2.5H22.5V17.5H3.5C2 17.5 1.5 16.5 1.5 15.5Z M5 6H19M5 9H10V14H5ZM12 9H19M12 12H19M12 15H19" />
        </Svg>
      </Slot>
      <TrayText $w={30} $ml={8} $size={13}>23°C</TrayText>
      <Slot $w={24} $ml={15}>
        <Svg w={14} h={8} color="#fff"><path d="M1 7L7 1L13 7" strokeWidth={1.4} /></Svg>
      </Slot>
      <Slot $w={24}>
        <Svg w={12} h={18} color="#fff">
          <rect x={1.5} y={5.5} width={8} height={8} rx={1} />
          <path d="M3 2H9M3 16H9M10 8L11.5 7V12L10 11" />
        </Svg>
      </Slot>
      <Slot $w={24}>
        <Svg w={18} h={18} color="#fff">
          <circle cx={8.5} cy={8.5} r={7.5} />
          <ellipse cx={8.5} cy={8.5} rx={3.5} ry={7.5} />
          <path d="M1 6H16M1 11H16" />
          <circle cx={14} cy={14} r={3} fill="#0a2f52" />
          <path d="M12 16L16 12" />
        </Svg>
      </Slot>
      <Slot $w={24}>
        <Svg w={18} h={14} color="#fff">
          <rect x={6.5} y={3.5} width={11} height={8} />
          <rect x={8} y={5} width={7} height={5} fill="#fff" />
          <path d="M2 1V4M5 1V4M1 4H6V7L3.5 9V13" />
        </Svg>
      </Slot>
      <Slot $w={24}>
        <Svg w={16} h={14} color="#fff">
          <path d="M1 5H4L8 1.5V12.5L4 9H1Z M10.5 4.5C11.5 6 11.5 8 10.5 9.5 M13 3C14.5 5 14.5 9 13 11" />
        </Svg>
      </Slot>
      <Slot $w={24}>
        <Svg w={16} h={16} color="#fff">
          <path d="M0.5 2.5L15.5 0.5V15.5H0.5Z M4 9C4 6 7 4.5 10 6 M11 8C11 11 8 12 5.5 10.5" />
          <circle cx={11.5} cy={12} r={3.2} fill="#e81123" stroke="none" />
        </Svg>
      </Slot>
      <TrayText $w={24} $ml={4}>ENG</TrayText>
      <TrayText $w={52} $ml={12}>04:56 AM</TrayText>
      <Slot $w={20} $ml={16}>
        <Svg w={16} h={16} color="#fff">
          <path d="M0.5 0.5H15.5V12.5H12L8 15.5V12.5H0.5Z" />
        </Svg>
      </Slot>
    </TaskBar>
  </Window>
);

export default App;
